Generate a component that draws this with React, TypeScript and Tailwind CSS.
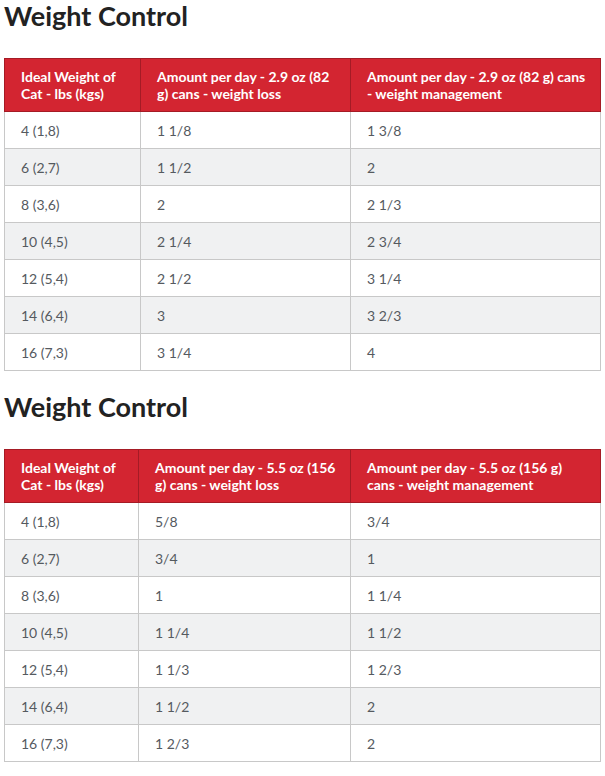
import React from "react";

interface FeedingTable {
  headers: React.ReactNode[];
  widths: string[];
  rows: string[][];
}

const tables: FeedingTable[] = [
  {
    headers: [
      <>Ideal Weight of<br />Cat - lbs (kgs)</>,
      <>Amount per day - 2.9 oz (82<br />g) cans - weight loss</>,
      <>Amount per day - 2.9 oz (82 g) cans<br />- weight management</>,
    ],
    widths: ["w-[136px]", "w-[210px]", "w-[250px]"],
    rows: [
      ["4 (1,8)", "1 1/8", "1 3/8"],
      ["6 (2,7)", "1 1/2", "2"],
      ["8 (3,6)", "2", "2 1/3"],
      ["10 (4,5)", "2 1/4", "2 3/4"],
      ["12 (5,4)", "2 1/2", "3 1/4"],
      ["14 (6,4)", "3", "3 2/3"],
      ["16 (7,3)", "3 1/4", "4"],
    ],
  },
  {
    headers: [
      <>Ideal Weight of<br />Cat - lbs (kgs)</>,
      <>Amount per day - 5.5 oz (156<br />g) cans - weight loss</>,
      <>Amount per day - 5.5 oz (156 g)<br />cans - weight management</>,
    ],
    widths: ["w-[134px]", "w-[212px]", "w-[250px]"],
    rows: [
      ["4 (1,8)", "5/8", "3/4"],
      ["6 (2,7)", "3/4", "1"],
      ["8 (3,6)", "1", "1 1/4"],
      ["10 (4,5)", "1 1/4", "1 1/2"],
      ["12 (5,4)", "1 1/3", "1 2/3"],
      ["14 (6,4)", "1 1/2", "2"],
      ["16 (7,3)", "1 2/3", "2"],
    ],
  },
];

const Table: React.FC<{ table: FeedingTable }> = ({ table }) => (
  <table className="w-[596px] table-fixed border-collapse text-[14px]">
    <thead>
      <tr className="bg-[#d32531] text-white">
        {table.headers.map((h, i) => (
          <th
            key={i}
            className={`${table.widths[i]} h-[53px] whitespace-nowrap border border-[#a51b25] px-4 text-left align-middle font-bold leading-[17px]`}
          >
            {h}
          </th>
        ))}
      </tr>
    </thead>
    <tbody>
      {table.rows.map((row, r) => (
        <tr key={r} className={r % 2 === 1 ? "bg-[#f0f1f2]" : "bg-white"}>
          {row.map((cell, c) => (
            <td
              key={c}
              className="h-[37px] border border-[#c8c8c8] px-4 align-middle text-[#555a5f]"
            >
              {cell}
            </td>
          ))}
        </tr>
      ))}
    </tbody>
  </table>
);

export default function App() {
  return (
    <div className="bg-white pl-1 font-['Lato',sans-serif]">
      {tables.map((t, i) => (
        <section key={i} className={i === 0 ? "" : "mt-[20px]"}>
          <h2 className="text-[27px] font-bold leading-[32px] text-[#222]">Weight Control</h2>
          <div className="mt-[26px]">
            <Table table={t} />
          </div>
        </section>
      ))}
    </div>
  );
}
